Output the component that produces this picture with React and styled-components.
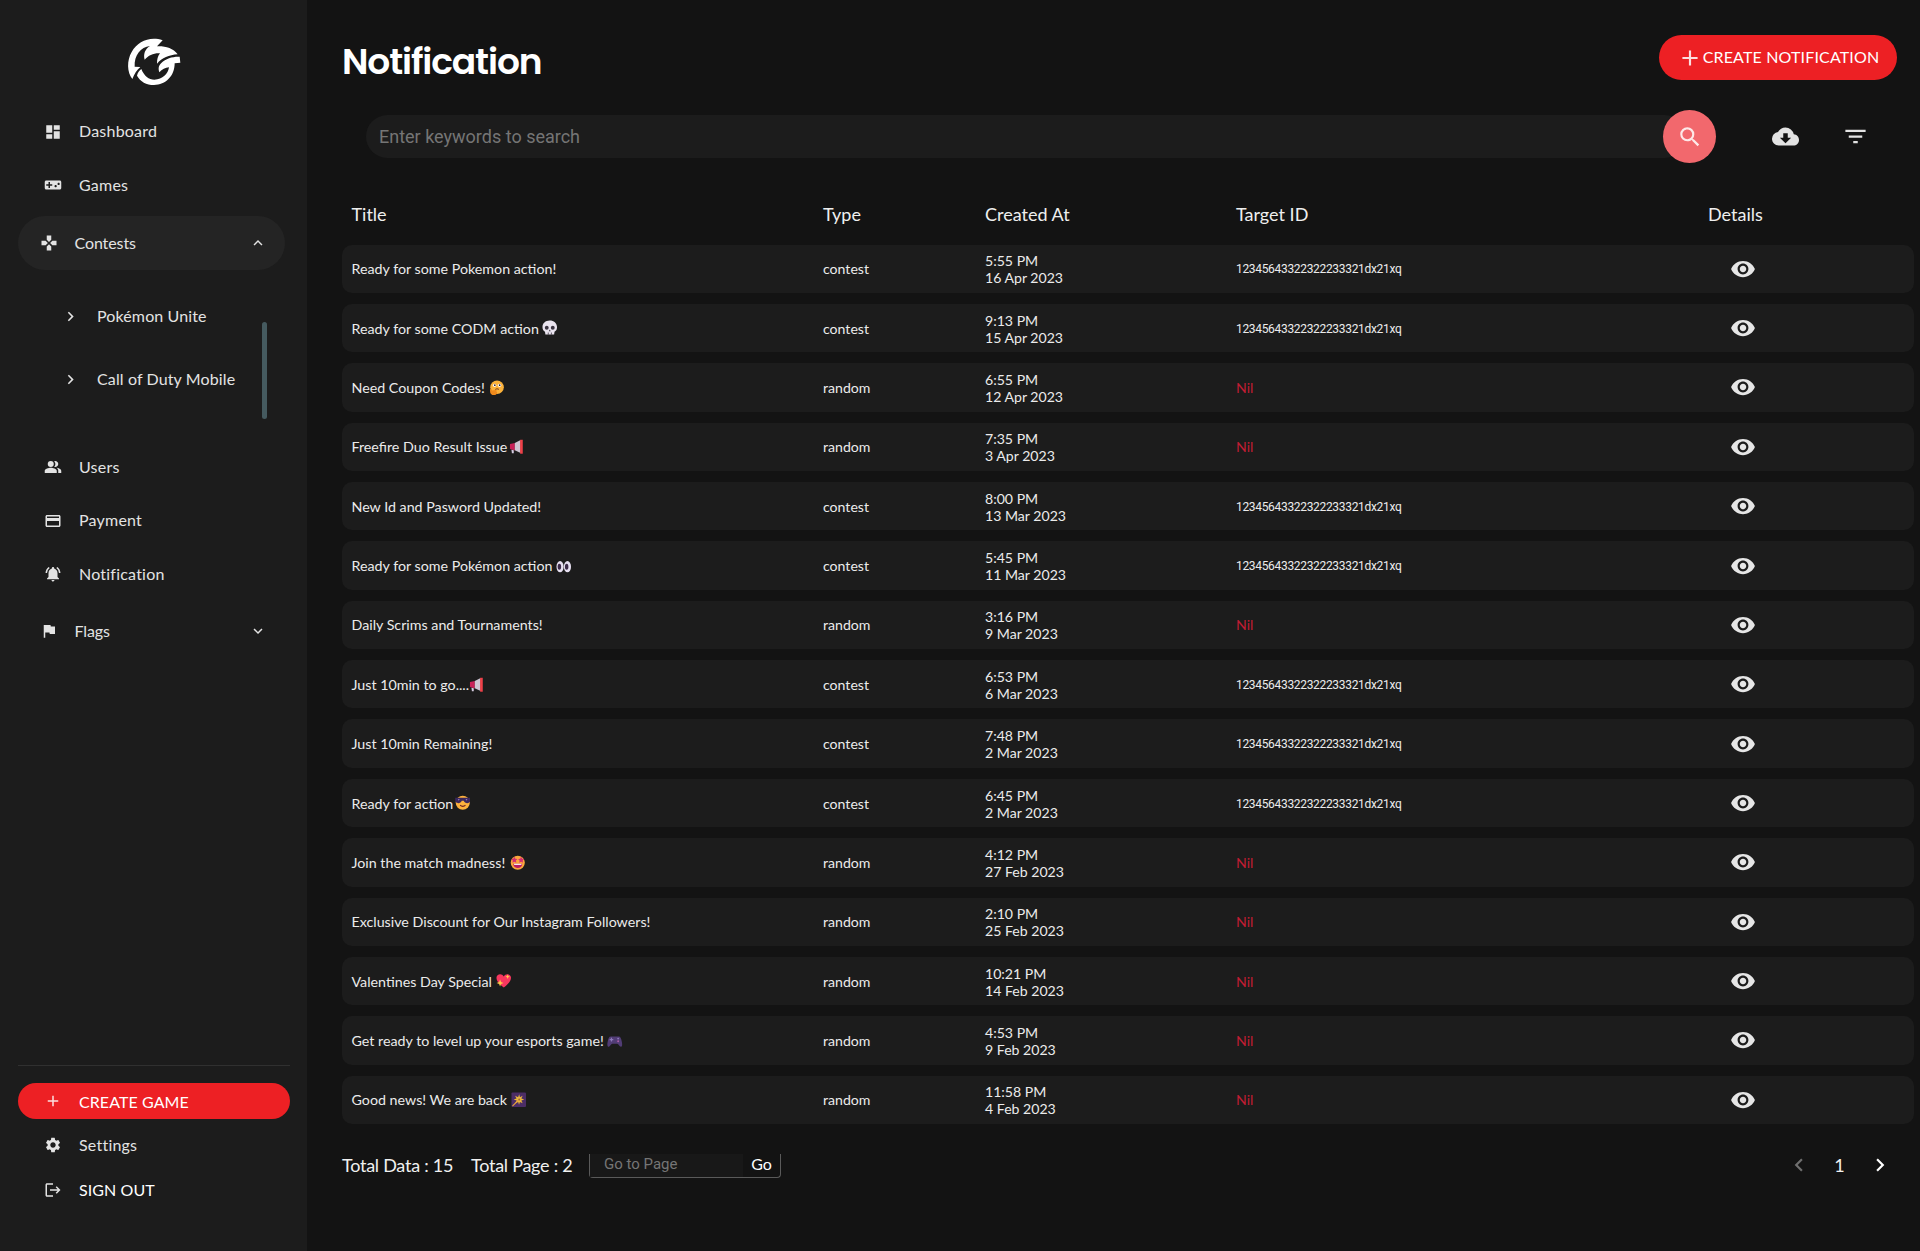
import React from "react";
import styled, { createGlobalStyle } from "styled-components";
import {
  MdDashboard, MdVideogameAsset, MdGamepad, MdPeopleAlt, MdPayment, MdNotificationsActive,
  MdFlag, MdSettings, MdLogout, MdAdd, MdSearch, MdCloudDownload, MdFilterList,
  MdRemoveRedEye, MdExpandLess, MdExpandMore, MdChevronLeft, MdChevronRight,
} from "react-icons/md";

const GlobalStyle = createGlobalStyle`
  *, *::before, *::after { box-sizing: border-box; }
  body { margin: 0; background: #131313; color: #e8e8e8; font-family: Lato, sans-serif; }
  button, input { font: inherit; color: inherit; border: 0; background: none; padding: 0; margin: 0; }
  svg { display: block; flex: none; }
`;

const Page = styled.div`
  display: flex;
  height: 1251px;
  overflow: hidden;
`;

/* ---------- sidebar ---------- */
const Sidebar = styled.aside`
  width: 307px;
  flex: none;
  display: flex;
  flex-direction: column;
  background: #1c1c1c;
  padding: 34px 17px 0 18px;
`;
const LogoBox = styled.div`
  height: 71px;
  padding-left: 104px;
`;
const NavItem = styled.a`
  display: flex;
  align-items: center;
  height: ${(p) => p.$h || 53.5}px;
  padding-left: ${(p) => (p.$group ? 21.5 : 26)}px;
  margin-top: ${(p) => p.$mt || 0}px;
  font-size: 16px;
  letter-spacing: ${(p) => (p.$bright ? 0.08 : p.$group ? -0.1 : 0.22)}px;
  color: ${(p) => (p.$bright ? "#fff" : "#e3e3e3")};
  background: ${(p) => p.$bg || "transparent"};
  border-radius: 27px;
  width: ${(p) => (p.$group ? 267 : 272)}px;
`;
const NavIcon = styled.span`
  width: 18px;
  margin-right: 17px;
  display: flex;
  justify-content: center;
  font-size: 18px;
`;
const Label = styled.span`
  padding-bottom: ${(p) => p.$lift || 1.5}px;
`;
const Caret = styled.span`
  margin-left: auto;
  margin-right: 18px;
  font-size: 18px;
`;
const SubMenu = styled.div`
  display: flex;
  margin-top: 15px;
  height: 156px;
  width: 249px;
  justify-content: space-between;
`;
const SubItem = styled.a`
  display: flex;
  align-items: center;
  height: 63px;
  padding-left: 43px;
  gap: 17px;
  font-size: 16px;
  letter-spacing: 0.12px;
  color: #e3e3e3;
  white-space: nowrap;
  svg { font-size: 19px; }
`;
const ScrollThumb = styled.div`
  width: 5px;
  height: 97px;
  margin-top: 37px;
  border-radius: 3px;
  background: #455a5f;
`;
const SideFoot = styled.div`
  margin-top: auto;
  height: 186px;
  border-top: 1px solid #303030;
  padding-top: 17px;
`;

/* ---------- main ---------- */
const Main = styled.main`
  flex: 1;
  min-width: 0;
  padding: 35px 6px 0 35px;
`;
const TopBar = styled.header`
  display: flex;
  justify-content: space-between;
  height: 75px;
  padding-right: 17px;
`;
const Heading = styled.h1`
  margin: 5px 0 0 0;
  font: 600 36px/44px Poppins, Inter, sans-serif;
  letter-spacing: -1.1px;
  color: #fff;
`;
const CreateButton = styled.button`
  display: flex;
  align-items: center;
  justify-content: center;
  width: 238px;
  height: 45px;
  border-radius: 23px;
  background: #ed2024;
  color: #fff;
  font-size: 16px;
  letter-spacing: 0.15px;
  white-space: nowrap;
  svg { font-size: 26px; color: #fbdfe0; }
`;
const Toolbar = styled.div`
  display: flex;
  align-items: center;
  height: 53px;
  padding-left: 24px;
  color: #e3e3e3;
`;
const SearchInput = styled.input`
  width: 1320px;
  height: 43px;
  border-radius: 22px;
  background: #1c1c1c;
  padding-left: 13px;
  font: 18px Roboto, sans-serif;
  outline: none;
  &::placeholder { color: #757575; opacity: 1; }
`;
const SearchButton = styled.button`
  display: flex;
  align-items: center;
  justify-content: center;
  flex: none;
  width: 53px;
  height: 53px;
  margin-left: -23px;
  border-radius: 50%;
  background: #f2686d;
  color: #fde9e9;
  font-size: 26px;
`;
const ToolButton = styled.button`
  display: flex;
  margin-left: ${(p) => p.$ml}px;
  font-size: 27px;
`;

const columns = "471.5px 162px 251px 472px 1fr";
const HeadRow = styled.div`
  display: grid;
  grid-template-columns: ${columns};
  align-items: center;
  height: 55px;
  margin-top: 23px;
  margin-bottom: 3.6px;
  padding-left: 9.5px;
  font-size: 18px;
  color: #efefef;
`;
const Rows = styled.div`
  display: flex;
  flex-direction: column;
  gap: 11px;
`;
const Row = styled.div`
  display: grid;
  grid-template-columns: ${columns};
  align-items: center;
  height: 48.36px;
  padding-left: 9.5px;
  border-radius: 10px;
  background: #1c1c1c;
  color: #ebebeb;
  font-size: 14.1px;
`;
const TitleCell = styled.div`
  display: flex;
  align-items: center;
  gap: ${(p) => p.$gap}px;
  font-size: 14.25px;
  white-space: nowrap;
`;
const DateCell = styled.div`
  padding-top: 1px;
  line-height: 17px;
`;
const Target = styled.div`
  padding-top: 1px;
  font: 12px Roboto, sans-serif;
  letter-spacing: -0.32px;
`;
const Nil = styled.div`
  color: #c01c33;
`;
const EyeCell = styled.div`
  padding-left: 22px;
  font-size: 26px;
  color: #e6e6e6;
`;

const Footer = styled.footer`
  display: flex;
  align-items: center;
  height: 26px;
  margin-top: 29px;
  font-size: 18px;
  color: #f0f0f0;
  white-space: nowrap;
`;
const Total = styled.span`
  width: ${(p) => p.$w}px;
  padding-bottom: 2px;
  letter-spacing: -0.26px;
`;
const GoBox = styled.div`
  display: flex;
  width: 192px;
  height: 24px;
  border: 1px solid #5a5a5a;
  border-top: 0;
  border-radius: 0 0 4px 4px;
`;
const GoInput = styled.input`
  width: 153px;
  background: #181818;
  padding: 0 0 3px 14px;
  font: 15px Roboto, sans-serif;
  &::placeholder { color: #757575; opacity: 1; }
`;
const GoButton = styled.button`
  flex: 1;
  font-size: 16px;
  line-height: 20px;
  padding-bottom: 2px;
  color: #fff;
`;
const Pager = styled.div`
  display: flex;
  align-items: center;
  margin-left: auto;
  padding-right: 21px;
  padding-bottom: 2px;
`;
const PageArrow = styled.button`
  display: flex;
  font-size: 26px;
  color: ${(p) => (p.$off ? "#6f6f6f" : "#fff")};
`;
const PageNumber = styled.span`
  width: 55px;
  text-align: center;
`;

/* ---------- drawings ---------- */
const Logo = () => (
  <svg width="64" height="56" viewBox="0 0 192 168" fill="#fff">
    <path d="M31 135C15 115 14 80 29 54C47 22 84 6 122 19L105 37C130 36 153 42 167 61C141 63 120 72 105 89C105 76 107 67 114 58C94 57 80 64 68 77C64 61 68 46 84 36C56 39 36 64 38 98L55 99C44 108 37 120 31 135Z" />
    <path d="M45 125C47 116 52 109 58 105C66 126 81 137 97 137C122 136 138 120 141 100C130 101 120 106 112 115C108 102 110 95 118 87C132 73 153 67 173 68L175 86L158 88C158 126 131 153 96 153C73 153 55 143 45 125Z" />
  </svg>
);

const emojiArt = {
  skull: (
    <>
      <path fill="#e9e3ee" d="M8 .6C3.500.6.5 3.500.5 7.500c0 2.500 1 3.700 2.600 4.500l.4 3h9l.4-3c1.600-.8 2.600-2 2.600-4.500C15.500 3.500 12.500.6 8 .6z" />
      <circle cx="4.900" cy="8" r="2" fill="#3a3340" /><circle cx="11.100" cy="8" r="2" fill="#3a3340" />
      <path fill="#3a3340" d="M8 9.800l1 1.800H7zM6 13h.8v2.200H6zM9.200 13h.8v2.200h-.8z" />
    </>
  ),
  think: (
    <>
      <circle cx="8.300" cy="7.500" r="7" fill="#fbb13a" />
      <circle cx="5.800" cy="5.500" r="1.700" fill="#fff" /><circle cx="10.900" cy="5.500" r="1.700" fill="#fff" />
      <circle cx="6" cy="5.400" r=".9" fill="#3a2430" /><circle cx="11" cy="5.400" r=".9" fill="#3a2430" />
      <path d="M6.500 9.700c1.200-.8 2.600-.7 3.700 0" stroke="#6b2e1c" fill="none" />
      <path fill="#f08a1c" d="M1.200 9.500c1-.8 1.700 0 2 1.400l3.800-.6c1.200 0 1.200 1.200.2 1.400 2 .6 1.600 4-2.400 4C2 15.700.6 13.500 1.200 9.500z" />
    </>
  ),
  horn: (
    <>
      <path fill="#c92058" d="M1 5.200l5-1v7.600l-5-1.400z" />
      <path fill="#cfc4d2" d="M6 4.200L12 1v13.500l-6-3z" />
      <path fill="#ef4048" d="M11.500.8h2.700v14.400h-2.700z" />
      <path fill="#d5cbe0" d="M2.500 11l2.400.6v3.200H3z" />
    </>
  ),
  eyes: (
    <>
      <ellipse cx="4.200" cy="9" rx="3.700" ry="5.800" fill="#e6dff0" /><ellipse cx="11.800" cy="9" rx="3.700" ry="5.800" fill="#e6dff0" />
      <ellipse cx="3.500" cy="9" rx="1.800" ry="3" fill="#3b2a48" /><ellipse cx="11" cy="9" rx="1.800" ry="3" fill="#3b2a48" />
    </>
  ),
  cool: (
    <>
      <circle cx="8" cy="8" r="7.300" fill="#fdb13d" />
      <path fill="#3a285c" d="M.2 2.800h15.600v3c0 3.300-5.800 3.600-6.800.2H7c-1 3.400-6.800 3.100-6.800-.2z" />
      <path fill="#8d73b8" d="M3 4h2L3.500 6zM11 4h2l-1.500 2z" />
      <path d="M5.300 10.500c1.500 1.700 4 1.700 5.500 0" stroke="#6b2323" strokeWidth="1.100" fill="none" />
    </>
  ),
  star: (
    <>
      <circle cx="8" cy="8" r="7.300" fill="#fba63d" />
      <path fill="#d52c72" d="M4.500 1.800l1 2 2.200.3-1.600 1.600.4 2.300-2-1.100-2 1.100.4-2.300L1.300 4.100l2.200-.3zM11.500 1.800l1 2 2.200.3-1.600 1.600.4 2.300-2-1.100-2 1.100.4-2.300-1.600-1.600 2.200-.3z" />
      <path fill="#b91c62" d="M3.300 9h9.400c-.2 6-9.200 6-9.400 0z" />
      <path fill="#fff" d="M4.200 9h7.600v1.200H4.200z" />
    </>
  ),
  heart: (
    <>
      <path fill="#f8375f" d="M8 15C3.500 11.500.5 8.500.5 5 .5.800 6-.2 8 3.500 10-.2 15.500.8 15.500 5c0 3.500-3 6.500-7.500 10z" />
      <path fill="#ffc64a" d="M4.200 6.800l1 2.600 2.600 1-2.600 1-1 2.600-1-2.600-2.600-1 2.600-1zM12 1.500l.7 1.600 1.600.7-1.600.7-.7 1.600-.7-1.600-1.600-.7 1.600-.7z" />
    </>
  ),
  pad: (
    <>
      <path fill="#513c75" d="M4 3.500h8c2 0 2.600 2 3.300 5.500.8 4 .1 5.200-1 5.200-1.500 0-2.300-3-3.800-3h-5c-1.500 0-2.300 3-3.800 3-1.100 0-1.800-1.200-1-5.200C1.400 5.500 2 3.500 4 3.500z" />
      <path fill="#8c78b8" d="M4 5h1.200v1.300h1.300v1.200H5.200v1.300H4V7.500H2.700V6.300H4z" />
      <circle cx="11.500" cy="5.800" r="1" fill="#8c78b8" /><circle cx="11.500" cy="8.500" r="1" fill="#b05fa8" />
    </>
  ),
  spark: (
    <>
      <rect x=".5" y=".5" width="15" height="15" rx="1" fill="#4b2d66" />
      <path fill="#e9b63c" d="M8.500 2.200l.7 3.200 2.800-1.500-1.300 2.900 3 .9-3 1 1.300 2.900-2.800-1.400-.9 3-.9-3-3 1.500 1.500-3-3.200-1 3-1-1.500-2.900 3.100 1.600z" />
      <path d="M1.500 14.500L8 8" stroke="#e8a33a" strokeWidth="1.100" />
      <circle cx="8.500" cy="7.700" r="1" fill="#a06a38" />
    </>
  ),
};
const Emoji = ({ name }) => (
  <svg width="15.500" height="15.500" viewBox="0 0 16 16">{emojiArt[name]}</svg>
);

const ID = "12345643322322233321dx21xq";
const notifications = [
  ["Ready for some Pokemon action!", null, 0, "contest", "5:55 PM", "16 Apr 2023"],
  ["Ready for some CODM action", "skull", 3, "contest", "9:13 PM", "15 Apr 2023"],
  ["Need Coupon Codes!", "think", 4, "random", "6:55 PM", "12 Apr 2023"],
  ["Freefire Duo Result Issue", "horn", 1.5, "random", "7:35 PM", "3 Apr 2023"],
  ["New Id and Pasword Updated!", null, 0, "contest", "8:00 PM", "13 Mar 2023"],
  ["Ready for some Pokémon action", "eyes", 4, "contest", "5:45 PM", "11 Mar 2023"],
  ["Daily Scrims and Tournaments!", null, 0, "random", "3:16 PM", "9 Mar 2023"],
  ["Just 10min to go....", "horn", 0, "contest", "6:53 PM", "6 Mar 2023"],
  ["Just 10min Remaining!", null, 0, "contest", "7:48 PM", "2 Mar 2023"],
  ["Ready for action", "cool", 1.5, "contest", "6:45 PM", "2 Mar 2023"],
  ["Join the match madness!", "star", 4.5, "random", "4:12 PM", "27 Feb 2023"],
  ["Exclusive Discount for Our Instagram Followers!", null, 0, "random", "2:10 PM", "25 Feb 2023"],
  ["Valentines Day Special", "heart", 4.5, "random", "10:21 PM", "14 Feb 2023"],
  ["Get ready to level up your esports game!", "pad", 3.5, "random", "4:53 PM", "9 Feb 2023"],
  ["Good news! We are back", "spark", 3.5, "random", "11:58 PM", "4 Feb 2023"],
];

export default function App() {
  return (
    <Page>
      <GlobalStyle />
      <Sidebar>
        <LogoBox><Logo /></LogoBox>
        <NavItem><NavIcon><MdDashboard /></NavIcon><Label $lift={2.4}>Dashboard</Label></NavItem>
        <NavItem><NavIcon><MdVideogameAsset /></NavIcon><Label>Games</Label></NavItem>
        <NavItem $group $mt={4} $bg="#242424">
          <NavIcon><MdGamepad /></NavIcon>Contests<Caret><MdExpandLess /></Caret>
        </NavItem>
        <SubMenu>
          <div>
            <SubItem><MdChevronRight /><Label>Pokémon Unite</Label></SubItem>
            <SubItem><MdChevronRight /><Label>Call of Duty Mobile</Label></SubItem>
          </div>
          <ScrollThumb />
        </SubMenu>
        <NavItem><NavIcon><MdPeopleAlt /></NavIcon><Label>Users</Label></NavItem>
        <NavItem><NavIcon><MdPayment /></NavIcon><Label $lift={2}>Payment</Label></NavItem>
        <NavItem><NavIcon><MdNotificationsActive /></NavIcon><Label>Notification</Label></NavItem>
        <NavItem $group $mt={3.5}>
          <NavIcon><MdFlag /></NavIcon><Label>Flags</Label><Caret><MdExpandMore /></Caret>
        </NavItem>
        <SideFoot>
          <NavItem $h={36} $bg="#ed2024" $bright><NavIcon><MdAdd color="#fbdfe0" /></NavIcon>CREATE GAME</NavItem>
          <NavItem $h={44} $mt={4}><NavIcon><MdSettings /></NavIcon><Label>Settings</Label></NavItem>
          <NavItem $h={46} $bright><NavIcon><MdLogout color="#e3e3e3" /></NavIcon><Label>SIGN OUT</Label></NavItem>
        </SideFoot>
      </Sidebar>
      <Main>
        <TopBar>
          <Heading>Notification</Heading>
          <CreateButton><MdAdd /><Label>CREATE NOTIFICATION</Label></CreateButton>
        </TopBar>
        <Toolbar>
          <SearchInput placeholder="Enter keywords to search" />
          <SearchButton><MdSearch /></SearchButton>
          <ToolButton $ml={56}><MdCloudDownload /></ToolButton>
          <ToolButton $ml={43}><MdFilterList /></ToolButton>
        </Toolbar>
        <HeadRow>
          <div>Title</div><div>Type</div><div>Created At</div><div>Target ID</div><div>Details</div>
        </HeadRow>
        <Rows>
          {notifications.map(([title, emoji, gap, type, time, date]) => (
            <Row key={title}>
              <TitleCell $gap={gap}>{title}{emoji && <Emoji name={emoji} />}</TitleCell>
              <div>{type}</div>
              <DateCell>{time}<br />{date}</DateCell>
              {type === "contest" ? <Target>{ID}</Target> : <Nil>Nil</Nil>}
              <EyeCell><MdRemoveRedEye /></EyeCell>
            </Row>
          ))}
        </Rows>
        <Footer>
          <Total $w={129}>Total Data : 15</Total>
          <Total $w={118}>Total Page : 2</Total>
          <GoBox>
            <GoInput placeholder="Go to Page" />
            <GoButton>Go</GoButton>
          </GoBox>
          <Pager>
            <PageArrow $off><MdChevronLeft /></PageArrow>
            <PageNumber>1</PageNumber>
            <PageArrow><MdChevronRight /></PageArrow>
          </Pager>
        </Footer>
      </Main>
    </Page>
  );
}
